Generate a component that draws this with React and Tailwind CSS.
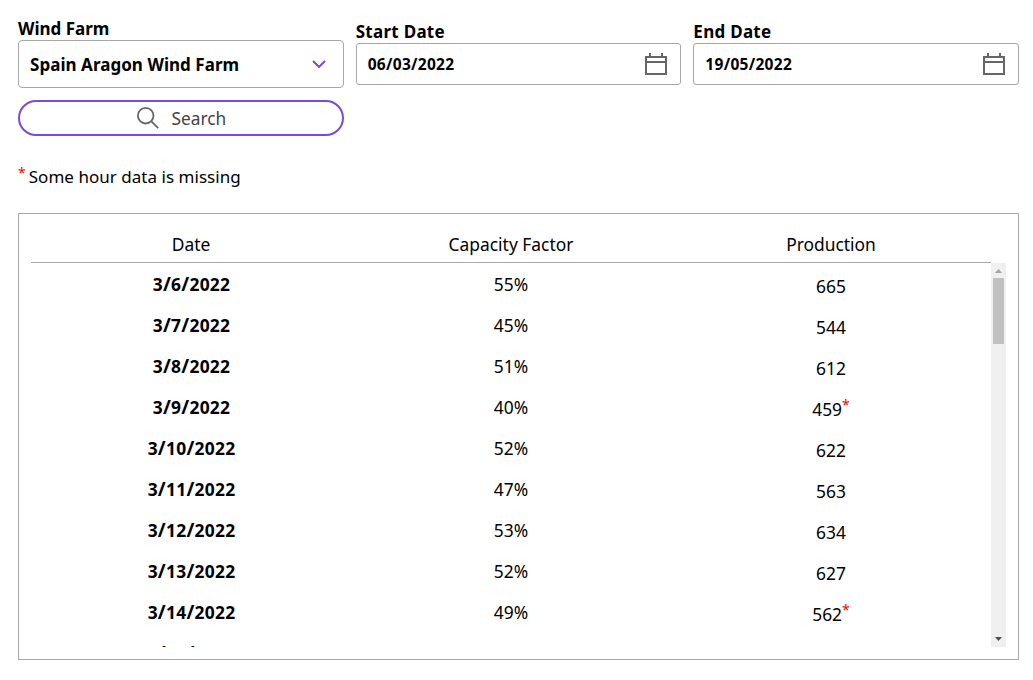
import { Fragment } from 'react';

const rows = [
  { date: '3/6/2022', factor: '55%', production: 665 },
  { date: '3/7/2022', factor: '45%', production: 544 },
  { date: '3/8/2022', factor: '51%', production: 612 },
  { date: '3/9/2022', factor: '40%', production: 459, missing: true },
  { date: '3/10/2022', factor: '52%', production: 622 },
  { date: '3/11/2022', factor: '47%', production: 563 },
  { date: '3/12/2022', factor: '53%', production: 634 },
  { date: '3/13/2022', factor: '52%', production: 627 },
  { date: '3/14/2022', factor: '49%', production: 562, missing: true },
  { date: '3/15/2022', factor: '50%', production: 598 },
];

function CalendarIcon() {
  return (
    <svg className="h-[22px] w-[22px] shrink-0" viewBox="0 0 22 22" fill="none" stroke="#666" strokeWidth="2">
      <path d="M1 4h20v17H1zM1 9h20" />
      <path d="M5 0v4M17 0v4" />
    </svg>
  );
}

function DateField({ label, value }) {
  return (
    <div className="pt-[3px]">
      <div className="h-[22px] text-[17px] leading-[22px] font-bold tracking-[0.28px]">{label}</div>
      <div className="flex h-[42px] items-center justify-between rounded-[3px] border border-[#a8a8a8] pr-[13px] pl-[11px]">
        <span className="pt-px text-[15.5px] font-bold tracking-[0.3px]">{value}</span>
        <CalendarIcon />
      </div>
    </div>
  );
}

function RowDate({ value }) {
  return (
    <span className="pl-px font-bold tracking-[0.25px]">
      {value.split('/').map((part, i) => (
        <Fragment key={i}>
          {i > 0 && <span className="text-[19px] leading-none">/</span>}
          {part}
        </Fragment>
      ))}
    </span>
  );
}

function Scrollbar() {
  return (
    <div className="flex w-[15px] shrink-0 flex-col items-center justify-between bg-[#f0f0f0]">
      <div className="flex flex-col items-center">
        <svg className="h-[15px] w-[15px]" viewBox="0 0 15 15" fill="#a3a3a3">
          <path d="M4 10h7L7.5 6z" />
        </svg>
        <div className="h-[66px] w-[11px] bg-[#c1c1c1]" />
      </div>
      <svg className="h-[15px] w-[15px]" viewBox="0 0 15 15" fill="#505050">
        <path d="M4 5h7L7.5 9z" />
      </svg>
    </div>
  );
}

export default function App() {
  return (
    <div className="h-[680px] overflow-hidden bg-white pt-[18px] pr-[14px] pl-[18px] font-['Noto_Sans',sans-serif] text-black">
      <div className="grid grid-cols-3 gap-x-3">
        <div>
          <div className="h-[22px] text-[17px] leading-[22px] font-bold">Wind Farm</div>
          <div className="flex h-12 items-center justify-between rounded-[4px] border border-[#a8a8a8] pr-[17px] pl-[11px]">
            <span className="pt-px text-[17px] font-bold tracking-[0.04px]">Spain Aragon Wind Farm</span>
            <svg className="h-2 w-[14px]" viewBox="0 0 14 8" fill="none" stroke="#7b4ad8" strokeWidth="2">
              <path d="M1 1l6 6 6-6" />
            </svg>
          </div>
          <button className="mt-3 flex h-9 w-full items-center justify-center gap-3 rounded-full border-2 border-[#7b4ad8] pl-[2px] text-[17.3px] text-[#444]">
            <svg className="h-[22px] w-[22px]" viewBox="0 0 22 22" fill="none" stroke="#666" strokeWidth="1.8">
              <circle cx="8.7" cy="8.7" r="7.8" />
              <path d="M14.2 14.2l7 7" />
            </svg>
            <span className="pt-px">Search</span>
          </button>
        </div>
        <DateField label="Start Date" value="06/03/2022" />
        <DateField label="End Date" value="19/05/2022" />
      </div>

      <div className="mt-[27px] flex h-[28px] gap-[3px] text-[17px] leading-[28px]">
        <span className="text-[14px] leading-[20px] text-[#ff0000]">*</span>
        <span className="tracking-[0.03px]">Some hour data is missing</span>
      </div>

      <div className="mt-[22px] flex h-[447px] flex-col border border-[#a8a8a8] p-3 text-[17.4px]">
        <div className="mr-[15px] grid h-[37px] shrink-0 grid-cols-3 border-b border-[#a8a8a8] text-center leading-[36px]">
          <span>Date</span>
          <span>Capacity Factor</span>
          <span>Production</span>
        </div>
        <div className="flex min-h-0 flex-1">
          <div className="min-w-0 flex-1 overflow-hidden">
            {rows.map((row) => (
              <div key={row.date} className="grid h-[41px] grid-cols-3 text-center leading-[42px]">
                <RowDate value={row.date} />
                <span>{row.factor}</span>
                <span className="flex justify-center pt-[2px]">
                  {row.production}
                  {row.missing && <span className="text-[14px] leading-[34px] text-[#ff0000]">*</span>}
                </span>
              </div>
            ))}
          </div>
          <Scrollbar />
        </div>
      </div>
    </div>
  );
}
